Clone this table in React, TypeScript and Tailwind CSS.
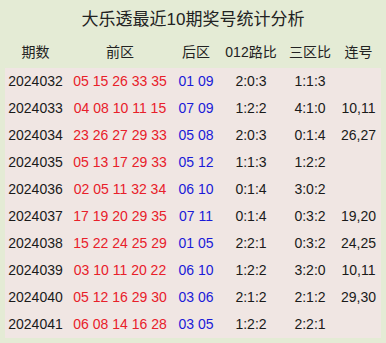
import React from "react";

const rows: [string, string, string, string, string, string][] = [
  ["2024032", "05 15 26 33 35", "01 09", "2:0:3", "1:1:3", ""],
  ["2024033", "04 08 10 11 15", "07 09", "1:2:2", "4:1:0", "10,11"],
  ["2024034", "23 26 27 29 33", "05 08", "2:0:3", "0:1:4", "26,27"],
  ["2024035", "05 13 17 29 33", "05 12", "1:1:3", "1:2:2", ""],
  ["2024036", "02 05 11 32 34", "06 10", "0:1:4", "3:0:2", ""],
  ["2024037", "17 19 20 29 35", "07 11", "0:1:4", "0:3:2", "19,20"],
  ["2024038", "15 22 24 25 29", "01 05", "2:2:1", "0:3:2", "24,25"],
  ["2024039", "03 10 11 20 22", "06 10", "1:2:2", "3:2:0", "10,11"],
  ["2024040", "05 12 16 29 30", "03 06", "2:1:2", "2:1:2", "29,30"],
  ["2024041", "06 08 14 16 28", "03 05", "1:2:2", "2:2:1", ""],
];

const font = { fontFamily: '"Liberation Sans", "Noto Sans CJK SC", sans-serif' };

export default function App() {
  return (
    <div
      className="w-[386px] h-[343px] bg-[#e4ebd5] px-[5px] pb-[5px] text-[14px] text-[#1a1a1a]"
      style={font}
    >
      <div className="h-[36px] pt-[3px] flex items-center justify-center text-[17px] text-[#222]">
        大乐透最近10期奖号统计分析
      </div>
      <div className="grid grid-cols-[61px_108px_44px_66px_52px_45px] h-[32px] items-center text-center text-[#222]">
        <div>期数</div>
        <div>前区</div>
        <div>后区</div>
        <div>012路比</div>
        <div>三区比</div>
        <div>连号</div>
      </div>
      <div className="bg-[#f0e6e3]">
        {rows.map((r) => (
          <div
            key={r[0]}
            className="grid grid-cols-[61px_108px_44px_66px_52px_45px] h-[27px] items-center text-center"
          >
            <div>{r[0]}</div>
            <div className="text-[#e8202a]">{r[1]}</div>
            <div className="text-[#1a1ad8]">{r[2]}</div>
            <div>{r[3]}</div>
            <div>{r[4]}</div>
            <div>{r[5]}</div>
          </div>
        ))}
      </div>
    </div>
  );
}
